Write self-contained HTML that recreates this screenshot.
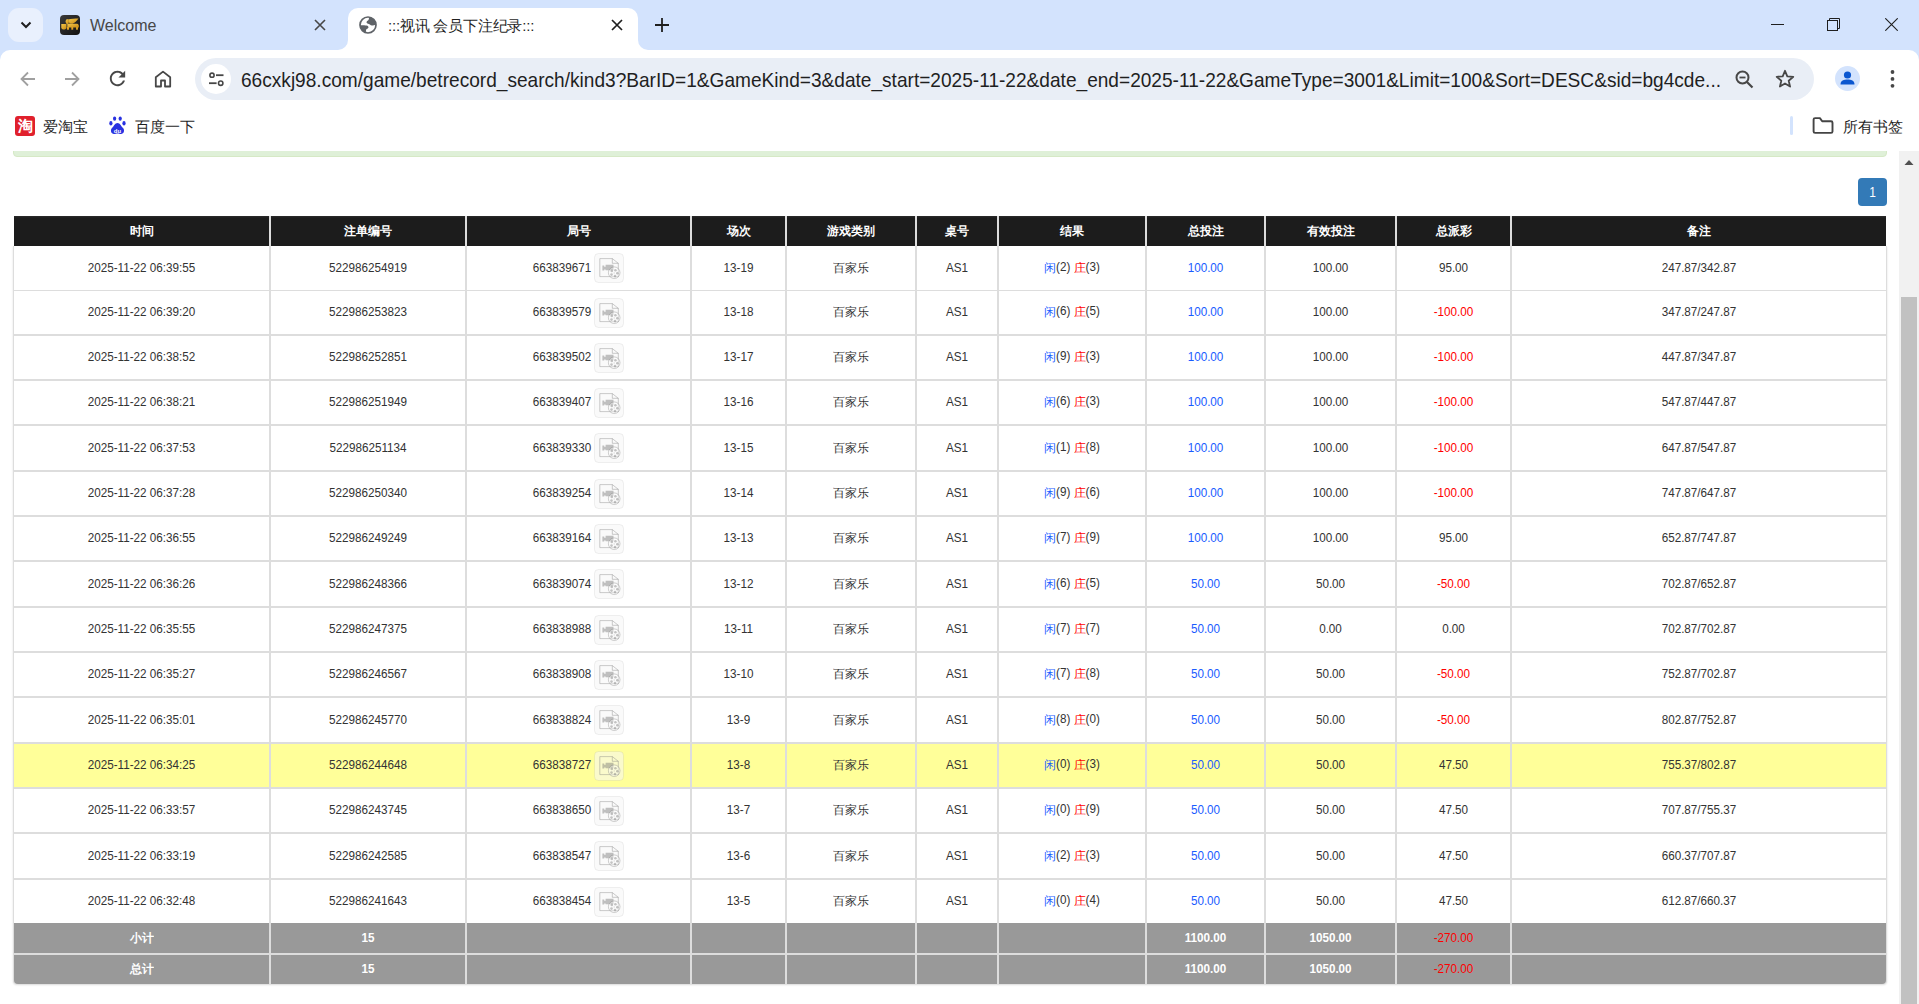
<!DOCTYPE html>
<html><head><meta charset="utf-8"><title>:::视讯 会员下注纪录:::</title>
<style>
*{box-sizing:border-box;margin:0;padding:0}
html,body{width:1919px;height:1004px;overflow:hidden;background:#fff;font-family:"Liberation Sans",sans-serif;position:relative}
.a{position:absolute}
.tabs{left:0;top:0;width:1919px;height:62px;background:#d3e3fd}
.ui{font-family:"Liberation Sans",sans-serif;color:#1f1f1f;white-space:nowrap}
.cell{position:absolute;display:flex;align-items:center;justify-content:center;white-space:nowrap;font-size:11.7px;color:#333}
.t{display:inline-block;transform:scaleY(1.16);position:relative;top:-2px}
.c{display:inline-block;transform:scaleY(.862);position:relative;top:2px}
.hd{color:#fff;font-weight:bold;font-size:12px;background:linear-gradient(#2c2c2c,#1c1c1c 2px,#1c1c1c)}
.ft{color:#fff;font-weight:bold;font-size:11.7px;background:#999}
.bl{color:#1a5cff}
.rd{color:#ff0000}
.vid{display:block;width:30px;height:30px;margin-left:3px;position:relative;top:0}
</style></head><body>

<div class="a tabs"></div>
<div class="a" style="left:8px;top:8px;width:35px;height:34px;border-radius:11px;background:#e9f0fd"></div>
<svg class="a" style="left:19px;top:18px" width="14" height="14" viewBox="0 0 14 14"><path d="M2.5 4.5 L7 9 L11.5 4.5" fill="none" stroke="#1f1f1f" stroke-width="2"/></svg>
<div class="a" style="left:60px;top:15px;width:20px;height:20px;border-radius:4px;background:linear-gradient(135deg,#3a3a3a,#111)"></div>
<svg class="a" style="left:60px;top:15px" width="20" height="20" viewBox="0 0 20 20"><defs><linearGradient id="gd" x1="0" y1="0" x2="1" y2="1"><stop offset="0" stop-color="#f3c64a"/><stop offset="1" stop-color="#c98a12"/></linearGradient></defs><path d="M8 4.6 C11 3.6 15 3.6 18.5 3.6 C17 5.6 15 7.6 12.5 8.8 L9.5 8.6 Z" fill="url(#gd)"/><ellipse cx="7.3" cy="6.6" rx="1.7" ry="2.5" fill="url(#gd)"/><path d="M7.3 8.8 H17 C18.3 8.8 18.8 10 18.8 11 V12.4 H7.3 Z" fill="url(#gd)"/><rect x="7" y="12" width="2" height="2.7" fill="#e0a325"/><rect x="11.3" y="12" width="1.9" height="2.7" fill="#e0a325"/><rect x="16" y="12" width="2" height="2.7" fill="#d39a22"/><path d="M1.3 9 H6.5 V12.5 C6.5 14 5 14.6 3.9 14.6 C2.7 14.6 1.3 14 1.3 12.5 Z" fill="url(#gd)"/></svg>
<div class="a ui" style="left:90px;top:15px;font-size:16px;color:#474747;line-height:22px">Welcome</div>
<svg class="a" style="left:314px;top:19px" width="12" height="12" viewBox="0 0 12 12"><path d="M1 1 L11 11 M11 1 L1 11" stroke="#474747" stroke-width="1.6"/></svg>
<div class="a" style="left:348px;top:8px;width:290px;height:42px;background:#fff;border-radius:10px 10px 0 0"></div>
<div class="a" style="left:338px;top:40px;width:10px;height:10px;background:#fff"></div><div class="a" style="left:328px;top:30px;width:20px;height:20px;background:#d3e3fd;border-radius:0 0 10px 0"></div>
<div class="a" style="left:638px;top:40px;width:10px;height:10px;background:#fff"></div><div class="a" style="left:638px;top:30px;width:20px;height:20px;background:#d3e3fd;border-radius:0 0 0 10px"></div>
<svg class="a" style="left:356px;top:13px" width="24" height="24" viewBox="0 0 24 24"><defs><clipPath id="gc"><circle cx="12" cy="12" r="8"/></clipPath></defs><g clip-path="url(#gc)" fill="#5f6368"><path d="M13 3 C13 6 13 7 11.5 7.8 C10.2 8.5 10.2 10 11.5 10.4 C13.5 10.9 14.3 12.2 16 12.4 C17.5 12.6 19 11.8 21 11 L21 3 Z"/><path d="M3 12.2 C7 12.1 10 12 11.5 12.8 C12.8 13.5 12.9 15.2 11.2 15.8 C10 16.2 9.7 17.8 10 21 L3 21 Z"/></g><circle cx="12" cy="12" r="8" fill="none" stroke="#5f6368" stroke-width="1.7"/></svg>
<div class="a ui" style="left:388px;top:15px;font-size:15px;color:#1f1f1f;line-height:22px;letter-spacing:-0.2px">:::视讯 会员下注纪录:::</div>
<svg class="a" style="left:611px;top:19px" width="12" height="12" viewBox="0 0 12 12"><path d="M1 1 L11 11 M11 1 L1 11" stroke="#1f1f1f" stroke-width="1.7"/></svg>
<svg class="a" style="left:655px;top:18px" width="14" height="14" viewBox="0 0 14 14"><path d="M7 0 V14 M0 7 H14" stroke="#1f1f1f" stroke-width="1.8"/></svg>
<div class="a" style="left:1771px;top:24px;width:13px;height:1px;background:#1f1f1f"></div>
<svg class="a" style="left:1826px;top:17px" width="15" height="15" viewBox="0 0 15 15"><rect x="1.5" y="3.5" width="10" height="10" fill="none" stroke="#1f1f1f" stroke-width="1"/><path d="M3.5 3.5 V1.5 H13.5 V11.5 H11.5" fill="none" stroke="#1f1f1f" stroke-width="1"/></svg>
<svg class="a" style="left:1885px;top:18px" width="13" height="13" viewBox="0 0 13 13"><path d="M0.3 0.3 L12.7 12.7 M12.7 0.3 L0.3 12.7" stroke="#1f1f1f" stroke-width="1.1"/></svg>
<div class="a" style="left:0;top:50px;width:1919px;height:101px;background:#fff;border-radius:10px 10px 0 0"></div>
<svg class="a" style="left:19px;top:70px" width="18" height="18" viewBox="0 0 18 18"><path d="M16 9 H3 M9 2.5 L2.5 9 L9 15.5" fill="none" stroke="#a0a0a0" stroke-width="1.8"/></svg>
<svg class="a" style="left:63px;top:70px" width="18" height="18" viewBox="0 0 18 18"><path d="M2 9 H15 M9 2.5 L15.5 9 L9 15.5" fill="none" stroke="#a0a0a0" stroke-width="1.8"/></svg>
<svg class="a" style="left:106px;top:67px" width="23" height="23" viewBox="0 0 24 24"><path d="M17.65 6.35C16.2 4.9 14.21 4 12 4c-4.42 0-7.99 3.58-7.99 8s3.57 8 7.99 8c3.73 0 6.84-2.55 7.73-6h-2.08c-.82 2.33-3.04 4-5.65 4-3.31 0-6-2.690-6-6s2.69-6 6-6c1.66 0 3.14.69 4.22 1.78L13 11h7V4l-2.35 2.35z" fill="#474747"/></svg>
<svg class="a" style="left:154px;top:70px" width="18" height="18" viewBox="0 0 18 18"><path d="M1.8 16.5 V7.2 L9 1.6 L16.2 7.2 V16.5 H11 V10.5 H7 V16.5 Z" fill="none" stroke="#474747" stroke-width="1.8" stroke-linejoin="round"/></svg>
<div class="a" style="left:195px;top:58px;width:1619px;height:42px;border-radius:21px;background:#e9eef6"></div>
<div class="a" style="left:201px;top:64px;width:30px;height:30px;border-radius:15px;background:#fff"></div>
<svg class="a" style="left:207px;top:70px" width="18" height="18" viewBox="0 0 18 18"><circle cx="5" cy="5.2" r="2.1" fill="none" stroke="#474747" stroke-width="1.6"/><path d="M9 5.2 H16.5" stroke="#474747" stroke-width="1.8"/><circle cx="13.7" cy="13.2" r="2.2" fill="none" stroke="#474747" stroke-width="1.6"/><path d="M2 13.2 H9.6" stroke="#474747" stroke-width="1.8"/></svg>
<div class="a ui" style="left:241px;top:67px;font-size:19.1px;line-height:26px;color:#1f1f1f;width:1482px;overflow:hidden;transform:scaleY(1.1);transform-origin:0 50%" id="url">66cxkj98.com/game/betrecord_search/kind3?BarID=1&amp;GameKind=3&amp;date_start=2025-11-22&amp;date_end=2025-11-22&amp;GameType=3001&amp;Limit=100&amp;Sort=DESC&amp;sid=bg4cde...</div>
<svg class="a" style="left:1735px;top:70px" width="19" height="19" viewBox="0 0 19 19"><circle cx="7.5" cy="7.5" r="6" fill="none" stroke="#474747" stroke-width="2"/><path d="M12 12 L17.5 17.5" stroke="#474747" stroke-width="2.2"/><path d="M4.5 7.5 H10.5" stroke="#474747" stroke-width="1.8"/></svg>
<svg class="a" style="left:1775px;top:69px" width="20" height="20" viewBox="0 0 20 20"><path d="M10 1.8 L12.3 7.3 L18.3 7.8 L13.7 11.7 L15.1 17.6 L10 14.5 L4.9 17.6 L6.3 11.7 L1.7 7.8 L7.7 7.3 Z" fill="none" stroke="#474747" stroke-width="1.8" stroke-linejoin="round"/></svg>
<div class="a" style="left:1835px;top:66px;width:25px;height:25px;border-radius:13px;background:#d3e3fd"></div>
<svg class="a" style="left:1835px;top:66px" width="25" height="25" viewBox="0 0 25 25"><circle cx="12.5" cy="9" r="3.6" fill="#0b57d0"/><path d="M5.5 18.5 C5.5 14.5 9 13.6 12.5 13.6 C16 13.6 19.5 14.5 19.5 18.5 Z" fill="#0b57d0"/></svg>
<svg class="a" style="left:1889px;top:69px" width="7" height="20" viewBox="0 0 7 20"><circle cx="3.5" cy="3" r="1.9" fill="#474747"/><circle cx="3.5" cy="9.9" r="1.9" fill="#474747"/><circle cx="3.5" cy="16.8" r="1.9" fill="#474747"/></svg>
<div class="a" style="left:15px;top:116px;width:20px;height:20px;border-radius:3px;background:#e0202c"></div>
<div class="a ui" style="left:15px;top:116px;width:20px;height:20px;line-height:20px;text-align:center;font-size:15px;color:#fff;font-weight:bold">淘</div>
<div class="a ui" style="left:43px;top:116px;font-size:15px;line-height:22px;color:#1f1f1f">爱淘宝</div>
<svg class="a" style="left:109px;top:116px" width="17" height="19" viewBox="0 0 17 19"><ellipse cx="5.6" cy="2.6" rx="1.6" ry="2.2" fill="#2932e1"/><ellipse cx="11.2" cy="2.6" rx="1.6" ry="2.2" fill="#2932e1"/><ellipse cx="1.9" cy="7.2" rx="1.6" ry="2.2" fill="#2932e1"/><ellipse cx="15" cy="7.2" rx="1.6" ry="2.2" fill="#2932e1"/><path d="M8.5 7 C6 7 5 10 3 12 C1 14 2 18 5 18 C6.5 18 7 17.5 8.5 17.5 C10 17.5 10.5 18 12 18 C15 18 16 14 14 12 C12 10 11 7 8.5 7Z" fill="#2932e1"/><text x="8.5" y="16.5" font-size="6" font-family="Liberation Sans" font-weight="bold" fill="#fff" text-anchor="middle">du</text></svg>
<div class="a ui" style="left:135px;top:116px;font-size:15px;line-height:22px;color:#1f1f1f">百度一下</div>
<div class="a" style="left:1790px;top:116px;width:3px;height:19px;border-radius:1.5px;background:#d3e3fd"></div>
<svg class="a" style="left:1812px;top:117px" width="22" height="17" viewBox="0 0 22 17"><path d="M1.6 2.6 Q1.6 1.1 3.1 1.1 H7.9 L10.2 4.3 H19.1 Q20.5 4.3 20.5 5.7 V14.5 Q20.5 15.9 19.1 15.9 H3.1 Q1.6 15.9 1.6 14.5 Z" fill="none" stroke="#444" stroke-width="1.9" stroke-linejoin="round"/></svg>
<div class="a ui" style="left:1843px;top:116px;font-size:15px;line-height:22px;color:#1f1f1f">所有书签</div>
<div class="a" style="left:13px;top:137px;width:1874px;height:20px;background:#dff0d8;border:1px solid #d6e9c6;border-radius:4px"></div>
<div class="a" style="left:0;top:117px;width:1919px;height:34px"></div>
<div class="a" style="left:0;top:136px;width:1899px;height:15px;background:#fff"></div>
<div class="a" style="left:1899px;top:151px;width:20px;height:853px;background:#f1f1f1"></div>
<svg class="a" style="left:1903px;top:158px" width="12" height="8" viewBox="0 0 12 8"><path d="M1.5 7 L6 2 L10.5 7 Z" fill="#505050"/></svg>
<div class="a" style="left:1901px;top:297px;width:16px;height:707px;background:#c1c1c1"></div>
<div class="a ui" style="left:1858px;top:178px;width:29px;height:28px;border-radius:4px;background:#337ab7;color:#fff;font-size:12px;line-height:28px;text-align:center"><span style="display:inline-block;transform:scaleY(1.16)">1</span></div>
<div class="a" style="left:14px;top:216px;width:1872px;height:30px;background:#dddddd"></div>
<div class="a" style="left:13px;top:246px;width:1874px;height:738px;background:#dddddd;border-radius:0 0 4px 4px;box-shadow:0 1px 2px rgba(0,0,0,.15)"></div>
<div class="cell hd" style="left:14px;top:216px;width:255px;height:30px">时间</div>
<div class="cell hd" style="left:271px;top:216px;width:194px;height:30px">注单编号</div>
<div class="cell hd" style="left:467px;top:216px;width:223px;height:30px">局号</div>
<div class="cell hd" style="left:692px;top:216px;width:93px;height:30px">场次</div>
<div class="cell hd" style="left:787px;top:216px;width:128px;height:30px">游戏类别</div>
<div class="cell hd" style="left:917px;top:216px;width:80px;height:30px">桌号</div>
<div class="cell hd" style="left:999px;top:216px;width:146px;height:30px">结果</div>
<div class="cell hd" style="left:1147px;top:216px;width:117px;height:30px">总投注</div>
<div class="cell hd" style="left:1266px;top:216px;width:129px;height:30px">有效投注</div>
<div class="cell hd" style="left:1397px;top:216px;width:113px;height:30px">总派彩</div>
<div class="cell hd" style="left:1512px;top:216px;width:374px;height:30px">备注</div>
<div class="cell" style="left:14px;top:246px;width:255px;height:44px;background:#ffffff"><span class="t">2025-11-22 06:39:55</span></div>
<div class="cell" style="left:271px;top:246px;width:194px;height:44px;background:#ffffff"><span class="t">522986254919</span></div>
<div class="cell" style="left:467px;top:246px;width:223px;height:44px;background:#ffffff"><span class="t">663839671</span><svg class="vid" width="30" height="30" viewBox="0 0 30 30"><rect x="0.5" y="0.5" width="29" height="29" rx="4" fill="rgba(246,246,246,0.55)" stroke="rgba(0,0,0,0.06)"/><g><path d="M5.8 5.6 H18.3 L24.3 10.3 V23.6 H5.8 Z" fill="none" stroke="rgba(120,120,120,0.38)" stroke-width="1"/><path d="M18.3 5.6 V10.3 H24.3" fill="none" stroke="rgba(120,120,120,0.38)"/><path d="M8.4 12.6 H10.2 V17.6 H8.4 Z M10.2 13.8 H11.6 V16.4 H10.2 Z M11.6 11.8 H19.5 V17.2 H11.6 Z" fill="rgba(110,110,110,0.42)"/><circle cx="20.2" cy="19.7" r="5.8" fill="rgba(255,255,255,0.35)" stroke="rgba(120,120,120,0.4)" stroke-width="0.9"/><circle cx="17.8" cy="17.9" r="1.3" fill="rgba(110,110,110,0.4)"/><circle cx="21.4" cy="17.3" r="1.3" fill="rgba(110,110,110,0.4)"/><circle cx="23.3" cy="20.3" r="1.3" fill="rgba(110,110,110,0.4)"/><circle cx="21" cy="23.1" r="1.3" fill="rgba(110,110,110,0.4)"/><circle cx="17.5" cy="21.6" r="1.3" fill="rgba(110,110,110,0.4)"/><path d="M19.6 20 H20.8" stroke="rgba(110,110,110,0.4)" stroke-width="0.8"/></g></svg></div>
<div class="cell" style="left:692px;top:246px;width:93px;height:44px;background:#ffffff"><span class="t">13-19</span></div>
<div class="cell" style="left:787px;top:246px;width:128px;height:44px;background:#ffffff"><span class="t"><span class="c">百家乐</span></span></div>
<div class="cell" style="left:917px;top:246px;width:80px;height:44px;background:#ffffff"><span class="t">AS1</span></div>
<div class="cell" style="left:999px;top:246px;width:146px;height:44px;background:#ffffff"><span class="t"><span class="bl c">闲</span>(2)&nbsp;<span class="rd c">庄</span>(3)</span></div>
<div class="cell" style="left:1147px;top:246px;width:117px;height:44px;background:#ffffff"><span class="t"><span class="bl">100.00</span></span></div>
<div class="cell" style="left:1266px;top:246px;width:129px;height:44px;background:#ffffff"><span class="t">100.00</span></div>
<div class="cell" style="left:1397px;top:246px;width:113px;height:44px;background:#ffffff"><span class="t">95.00</span></div>
<div class="cell" style="left:1512px;top:246px;width:374px;height:44px;background:#ffffff"><span class="t">247.87/342.87</span></div>
<div class="cell" style="left:14px;top:291px;width:255px;height:43px;background:#ffffff"><span class="t">2025-11-22 06:39:20</span></div>
<div class="cell" style="left:271px;top:291px;width:194px;height:43px;background:#ffffff"><span class="t">522986253823</span></div>
<div class="cell" style="left:467px;top:291px;width:223px;height:43px;background:#ffffff"><span class="t">663839579</span><svg class="vid" width="30" height="30" viewBox="0 0 30 30"><rect x="0.5" y="0.5" width="29" height="29" rx="4" fill="rgba(246,246,246,0.55)" stroke="rgba(0,0,0,0.06)"/><g><path d="M5.8 5.6 H18.3 L24.3 10.3 V23.6 H5.8 Z" fill="none" stroke="rgba(120,120,120,0.38)" stroke-width="1"/><path d="M18.3 5.6 V10.3 H24.3" fill="none" stroke="rgba(120,120,120,0.38)"/><path d="M8.4 12.6 H10.2 V17.6 H8.4 Z M10.2 13.8 H11.6 V16.4 H10.2 Z M11.6 11.8 H19.5 V17.2 H11.6 Z" fill="rgba(110,110,110,0.42)"/><circle cx="20.2" cy="19.7" r="5.8" fill="rgba(255,255,255,0.35)" stroke="rgba(120,120,120,0.4)" stroke-width="0.9"/><circle cx="17.8" cy="17.9" r="1.3" fill="rgba(110,110,110,0.4)"/><circle cx="21.4" cy="17.3" r="1.3" fill="rgba(110,110,110,0.4)"/><circle cx="23.3" cy="20.3" r="1.3" fill="rgba(110,110,110,0.4)"/><circle cx="21" cy="23.1" r="1.3" fill="rgba(110,110,110,0.4)"/><circle cx="17.5" cy="21.6" r="1.3" fill="rgba(110,110,110,0.4)"/><path d="M19.6 20 H20.8" stroke="rgba(110,110,110,0.4)" stroke-width="0.8"/></g></svg></div>
<div class="cell" style="left:692px;top:291px;width:93px;height:43px;background:#ffffff"><span class="t">13-18</span></div>
<div class="cell" style="left:787px;top:291px;width:128px;height:43px;background:#ffffff"><span class="t"><span class="c">百家乐</span></span></div>
<div class="cell" style="left:917px;top:291px;width:80px;height:43px;background:#ffffff"><span class="t">AS1</span></div>
<div class="cell" style="left:999px;top:291px;width:146px;height:43px;background:#ffffff"><span class="t"><span class="bl c">闲</span>(6)&nbsp;<span class="rd c">庄</span>(5)</span></div>
<div class="cell" style="left:1147px;top:291px;width:117px;height:43px;background:#ffffff"><span class="t"><span class="bl">100.00</span></span></div>
<div class="cell" style="left:1266px;top:291px;width:129px;height:43px;background:#ffffff"><span class="t">100.00</span></div>
<div class="cell" style="left:1397px;top:291px;width:113px;height:43px;background:#ffffff"><span class="t"><span class="rd">-100.00</span></span></div>
<div class="cell" style="left:1512px;top:291px;width:374px;height:43px;background:#ffffff"><span class="t">347.87/247.87</span></div>
<div class="cell" style="left:14px;top:336px;width:255px;height:43px;background:#ffffff"><span class="t">2025-11-22 06:38:52</span></div>
<div class="cell" style="left:271px;top:336px;width:194px;height:43px;background:#ffffff"><span class="t">522986252851</span></div>
<div class="cell" style="left:467px;top:336px;width:223px;height:43px;background:#ffffff"><span class="t">663839502</span><svg class="vid" width="30" height="30" viewBox="0 0 30 30"><rect x="0.5" y="0.5" width="29" height="29" rx="4" fill="rgba(246,246,246,0.55)" stroke="rgba(0,0,0,0.06)"/><g><path d="M5.8 5.6 H18.3 L24.3 10.3 V23.6 H5.8 Z" fill="none" stroke="rgba(120,120,120,0.38)" stroke-width="1"/><path d="M18.3 5.6 V10.3 H24.3" fill="none" stroke="rgba(120,120,120,0.38)"/><path d="M8.4 12.6 H10.2 V17.6 H8.4 Z M10.2 13.8 H11.6 V16.4 H10.2 Z M11.6 11.8 H19.5 V17.2 H11.6 Z" fill="rgba(110,110,110,0.42)"/><circle cx="20.2" cy="19.7" r="5.8" fill="rgba(255,255,255,0.35)" stroke="rgba(120,120,120,0.4)" stroke-width="0.9"/><circle cx="17.8" cy="17.9" r="1.3" fill="rgba(110,110,110,0.4)"/><circle cx="21.4" cy="17.3" r="1.3" fill="rgba(110,110,110,0.4)"/><circle cx="23.3" cy="20.3" r="1.3" fill="rgba(110,110,110,0.4)"/><circle cx="21" cy="23.1" r="1.3" fill="rgba(110,110,110,0.4)"/><circle cx="17.5" cy="21.6" r="1.3" fill="rgba(110,110,110,0.4)"/><path d="M19.6 20 H20.8" stroke="rgba(110,110,110,0.4)" stroke-width="0.8"/></g></svg></div>
<div class="cell" style="left:692px;top:336px;width:93px;height:43px;background:#ffffff"><span class="t">13-17</span></div>
<div class="cell" style="left:787px;top:336px;width:128px;height:43px;background:#ffffff"><span class="t"><span class="c">百家乐</span></span></div>
<div class="cell" style="left:917px;top:336px;width:80px;height:43px;background:#ffffff"><span class="t">AS1</span></div>
<div class="cell" style="left:999px;top:336px;width:146px;height:43px;background:#ffffff"><span class="t"><span class="bl c">闲</span>(9)&nbsp;<span class="rd c">庄</span>(3)</span></div>
<div class="cell" style="left:1147px;top:336px;width:117px;height:43px;background:#ffffff"><span class="t"><span class="bl">100.00</span></span></div>
<div class="cell" style="left:1266px;top:336px;width:129px;height:43px;background:#ffffff"><span class="t">100.00</span></div>
<div class="cell" style="left:1397px;top:336px;width:113px;height:43px;background:#ffffff"><span class="t"><span class="rd">-100.00</span></span></div>
<div class="cell" style="left:1512px;top:336px;width:374px;height:43px;background:#ffffff"><span class="t">447.87/347.87</span></div>
<div class="cell" style="left:14px;top:381px;width:255px;height:43px;background:#ffffff"><span class="t">2025-11-22 06:38:21</span></div>
<div class="cell" style="left:271px;top:381px;width:194px;height:43px;background:#ffffff"><span class="t">522986251949</span></div>
<div class="cell" style="left:467px;top:381px;width:223px;height:43px;background:#ffffff"><span class="t">663839407</span><svg class="vid" width="30" height="30" viewBox="0 0 30 30"><rect x="0.5" y="0.5" width="29" height="29" rx="4" fill="rgba(246,246,246,0.55)" stroke="rgba(0,0,0,0.06)"/><g><path d="M5.8 5.6 H18.3 L24.3 10.3 V23.6 H5.8 Z" fill="none" stroke="rgba(120,120,120,0.38)" stroke-width="1"/><path d="M18.3 5.6 V10.3 H24.3" fill="none" stroke="rgba(120,120,120,0.38)"/><path d="M8.4 12.6 H10.2 V17.6 H8.4 Z M10.2 13.8 H11.6 V16.4 H10.2 Z M11.6 11.8 H19.5 V17.2 H11.6 Z" fill="rgba(110,110,110,0.42)"/><circle cx="20.2" cy="19.7" r="5.8" fill="rgba(255,255,255,0.35)" stroke="rgba(120,120,120,0.4)" stroke-width="0.9"/><circle cx="17.8" cy="17.9" r="1.3" fill="rgba(110,110,110,0.4)"/><circle cx="21.4" cy="17.3" r="1.3" fill="rgba(110,110,110,0.4)"/><circle cx="23.3" cy="20.3" r="1.3" fill="rgba(110,110,110,0.4)"/><circle cx="21" cy="23.1" r="1.3" fill="rgba(110,110,110,0.4)"/><circle cx="17.5" cy="21.6" r="1.3" fill="rgba(110,110,110,0.4)"/><path d="M19.6 20 H20.8" stroke="rgba(110,110,110,0.4)" stroke-width="0.8"/></g></svg></div>
<div class="cell" style="left:692px;top:381px;width:93px;height:43px;background:#ffffff"><span class="t">13-16</span></div>
<div class="cell" style="left:787px;top:381px;width:128px;height:43px;background:#ffffff"><span class="t"><span class="c">百家乐</span></span></div>
<div class="cell" style="left:917px;top:381px;width:80px;height:43px;background:#ffffff"><span class="t">AS1</span></div>
<div class="cell" style="left:999px;top:381px;width:146px;height:43px;background:#ffffff"><span class="t"><span class="bl c">闲</span>(6)&nbsp;<span class="rd c">庄</span>(3)</span></div>
<div class="cell" style="left:1147px;top:381px;width:117px;height:43px;background:#ffffff"><span class="t"><span class="bl">100.00</span></span></div>
<div class="cell" style="left:1266px;top:381px;width:129px;height:43px;background:#ffffff"><span class="t">100.00</span></div>
<div class="cell" style="left:1397px;top:381px;width:113px;height:43px;background:#ffffff"><span class="t"><span class="rd">-100.00</span></span></div>
<div class="cell" style="left:1512px;top:381px;width:374px;height:43px;background:#ffffff"><span class="t">547.87/447.87</span></div>
<div class="cell" style="left:14px;top:426px;width:255px;height:44px;background:#ffffff"><span class="t">2025-11-22 06:37:53</span></div>
<div class="cell" style="left:271px;top:426px;width:194px;height:44px;background:#ffffff"><span class="t">522986251134</span></div>
<div class="cell" style="left:467px;top:426px;width:223px;height:44px;background:#ffffff"><span class="t">663839330</span><svg class="vid" width="30" height="30" viewBox="0 0 30 30"><rect x="0.5" y="0.5" width="29" height="29" rx="4" fill="rgba(246,246,246,0.55)" stroke="rgba(0,0,0,0.06)"/><g><path d="M5.8 5.6 H18.3 L24.3 10.3 V23.6 H5.8 Z" fill="none" stroke="rgba(120,120,120,0.38)" stroke-width="1"/><path d="M18.3 5.6 V10.3 H24.3" fill="none" stroke="rgba(120,120,120,0.38)"/><path d="M8.4 12.6 H10.2 V17.6 H8.4 Z M10.2 13.8 H11.6 V16.4 H10.2 Z M11.6 11.8 H19.5 V17.2 H11.6 Z" fill="rgba(110,110,110,0.42)"/><circle cx="20.2" cy="19.7" r="5.8" fill="rgba(255,255,255,0.35)" stroke="rgba(120,120,120,0.4)" stroke-width="0.9"/><circle cx="17.8" cy="17.9" r="1.3" fill="rgba(110,110,110,0.4)"/><circle cx="21.4" cy="17.3" r="1.3" fill="rgba(110,110,110,0.4)"/><circle cx="23.3" cy="20.3" r="1.3" fill="rgba(110,110,110,0.4)"/><circle cx="21" cy="23.1" r="1.3" fill="rgba(110,110,110,0.4)"/><circle cx="17.5" cy="21.6" r="1.3" fill="rgba(110,110,110,0.4)"/><path d="M19.6 20 H20.8" stroke="rgba(110,110,110,0.4)" stroke-width="0.8"/></g></svg></div>
<div class="cell" style="left:692px;top:426px;width:93px;height:44px;background:#ffffff"><span class="t">13-15</span></div>
<div class="cell" style="left:787px;top:426px;width:128px;height:44px;background:#ffffff"><span class="t"><span class="c">百家乐</span></span></div>
<div class="cell" style="left:917px;top:426px;width:80px;height:44px;background:#ffffff"><span class="t">AS1</span></div>
<div class="cell" style="left:999px;top:426px;width:146px;height:44px;background:#ffffff"><span class="t"><span class="bl c">闲</span>(1)&nbsp;<span class="rd c">庄</span>(8)</span></div>
<div class="cell" style="left:1147px;top:426px;width:117px;height:44px;background:#ffffff"><span class="t"><span class="bl">100.00</span></span></div>
<div class="cell" style="left:1266px;top:426px;width:129px;height:44px;background:#ffffff"><span class="t">100.00</span></div>
<div class="cell" style="left:1397px;top:426px;width:113px;height:44px;background:#ffffff"><span class="t"><span class="rd">-100.00</span></span></div>
<div class="cell" style="left:1512px;top:426px;width:374px;height:44px;background:#ffffff"><span class="t">647.87/547.87</span></div>
<div class="cell" style="left:14px;top:472px;width:255px;height:43px;background:#ffffff"><span class="t">2025-11-22 06:37:28</span></div>
<div class="cell" style="left:271px;top:472px;width:194px;height:43px;background:#ffffff"><span class="t">522986250340</span></div>
<div class="cell" style="left:467px;top:472px;width:223px;height:43px;background:#ffffff"><span class="t">663839254</span><svg class="vid" width="30" height="30" viewBox="0 0 30 30"><rect x="0.5" y="0.5" width="29" height="29" rx="4" fill="rgba(246,246,246,0.55)" stroke="rgba(0,0,0,0.06)"/><g><path d="M5.8 5.6 H18.3 L24.3 10.3 V23.6 H5.8 Z" fill="none" stroke="rgba(120,120,120,0.38)" stroke-width="1"/><path d="M18.3 5.6 V10.3 H24.3" fill="none" stroke="rgba(120,120,120,0.38)"/><path d="M8.4 12.6 H10.2 V17.6 H8.4 Z M10.2 13.8 H11.6 V16.4 H10.2 Z M11.6 11.8 H19.5 V17.2 H11.6 Z" fill="rgba(110,110,110,0.42)"/><circle cx="20.2" cy="19.7" r="5.8" fill="rgba(255,255,255,0.35)" stroke="rgba(120,120,120,0.4)" stroke-width="0.9"/><circle cx="17.8" cy="17.9" r="1.3" fill="rgba(110,110,110,0.4)"/><circle cx="21.4" cy="17.3" r="1.3" fill="rgba(110,110,110,0.4)"/><circle cx="23.3" cy="20.3" r="1.3" fill="rgba(110,110,110,0.4)"/><circle cx="21" cy="23.1" r="1.3" fill="rgba(110,110,110,0.4)"/><circle cx="17.5" cy="21.6" r="1.3" fill="rgba(110,110,110,0.4)"/><path d="M19.6 20 H20.8" stroke="rgba(110,110,110,0.4)" stroke-width="0.8"/></g></svg></div>
<div class="cell" style="left:692px;top:472px;width:93px;height:43px;background:#ffffff"><span class="t">13-14</span></div>
<div class="cell" style="left:787px;top:472px;width:128px;height:43px;background:#ffffff"><span class="t"><span class="c">百家乐</span></span></div>
<div class="cell" style="left:917px;top:472px;width:80px;height:43px;background:#ffffff"><span class="t">AS1</span></div>
<div class="cell" style="left:999px;top:472px;width:146px;height:43px;background:#ffffff"><span class="t"><span class="bl c">闲</span>(9)&nbsp;<span class="rd c">庄</span>(6)</span></div>
<div class="cell" style="left:1147px;top:472px;width:117px;height:43px;background:#ffffff"><span class="t"><span class="bl">100.00</span></span></div>
<div class="cell" style="left:1266px;top:472px;width:129px;height:43px;background:#ffffff"><span class="t">100.00</span></div>
<div class="cell" style="left:1397px;top:472px;width:113px;height:43px;background:#ffffff"><span class="t"><span class="rd">-100.00</span></span></div>
<div class="cell" style="left:1512px;top:472px;width:374px;height:43px;background:#ffffff"><span class="t">747.87/647.87</span></div>
<div class="cell" style="left:14px;top:517px;width:255px;height:43px;background:#ffffff"><span class="t">2025-11-22 06:36:55</span></div>
<div class="cell" style="left:271px;top:517px;width:194px;height:43px;background:#ffffff"><span class="t">522986249249</span></div>
<div class="cell" style="left:467px;top:517px;width:223px;height:43px;background:#ffffff"><span class="t">663839164</span><svg class="vid" width="30" height="30" viewBox="0 0 30 30"><rect x="0.5" y="0.5" width="29" height="29" rx="4" fill="rgba(246,246,246,0.55)" stroke="rgba(0,0,0,0.06)"/><g><path d="M5.8 5.6 H18.3 L24.3 10.3 V23.6 H5.8 Z" fill="none" stroke="rgba(120,120,120,0.38)" stroke-width="1"/><path d="M18.3 5.6 V10.3 H24.3" fill="none" stroke="rgba(120,120,120,0.38)"/><path d="M8.4 12.6 H10.2 V17.6 H8.4 Z M10.2 13.8 H11.6 V16.4 H10.2 Z M11.6 11.8 H19.5 V17.2 H11.6 Z" fill="rgba(110,110,110,0.42)"/><circle cx="20.2" cy="19.7" r="5.8" fill="rgba(255,255,255,0.35)" stroke="rgba(120,120,120,0.4)" stroke-width="0.9"/><circle cx="17.8" cy="17.9" r="1.3" fill="rgba(110,110,110,0.4)"/><circle cx="21.4" cy="17.3" r="1.3" fill="rgba(110,110,110,0.4)"/><circle cx="23.3" cy="20.3" r="1.3" fill="rgba(110,110,110,0.4)"/><circle cx="21" cy="23.1" r="1.3" fill="rgba(110,110,110,0.4)"/><circle cx="17.5" cy="21.6" r="1.3" fill="rgba(110,110,110,0.4)"/><path d="M19.6 20 H20.8" stroke="rgba(110,110,110,0.4)" stroke-width="0.8"/></g></svg></div>
<div class="cell" style="left:692px;top:517px;width:93px;height:43px;background:#ffffff"><span class="t">13-13</span></div>
<div class="cell" style="left:787px;top:517px;width:128px;height:43px;background:#ffffff"><span class="t"><span class="c">百家乐</span></span></div>
<div class="cell" style="left:917px;top:517px;width:80px;height:43px;background:#ffffff"><span class="t">AS1</span></div>
<div class="cell" style="left:999px;top:517px;width:146px;height:43px;background:#ffffff"><span class="t"><span class="bl c">闲</span>(7)&nbsp;<span class="rd c">庄</span>(9)</span></div>
<div class="cell" style="left:1147px;top:517px;width:117px;height:43px;background:#ffffff"><span class="t"><span class="bl">100.00</span></span></div>
<div class="cell" style="left:1266px;top:517px;width:129px;height:43px;background:#ffffff"><span class="t">100.00</span></div>
<div class="cell" style="left:1397px;top:517px;width:113px;height:43px;background:#ffffff"><span class="t">95.00</span></div>
<div class="cell" style="left:1512px;top:517px;width:374px;height:43px;background:#ffffff"><span class="t">652.87/747.87</span></div>
<div class="cell" style="left:14px;top:562px;width:255px;height:44px;background:#ffffff"><span class="t">2025-11-22 06:36:26</span></div>
<div class="cell" style="left:271px;top:562px;width:194px;height:44px;background:#ffffff"><span class="t">522986248366</span></div>
<div class="cell" style="left:467px;top:562px;width:223px;height:44px;background:#ffffff"><span class="t">663839074</span><svg class="vid" width="30" height="30" viewBox="0 0 30 30"><rect x="0.5" y="0.5" width="29" height="29" rx="4" fill="rgba(246,246,246,0.55)" stroke="rgba(0,0,0,0.06)"/><g><path d="M5.8 5.6 H18.3 L24.3 10.3 V23.6 H5.8 Z" fill="none" stroke="rgba(120,120,120,0.38)" stroke-width="1"/><path d="M18.3 5.6 V10.3 H24.3" fill="none" stroke="rgba(120,120,120,0.38)"/><path d="M8.4 12.6 H10.2 V17.6 H8.4 Z M10.2 13.8 H11.6 V16.4 H10.2 Z M11.6 11.8 H19.5 V17.2 H11.6 Z" fill="rgba(110,110,110,0.42)"/><circle cx="20.2" cy="19.7" r="5.8" fill="rgba(255,255,255,0.35)" stroke="rgba(120,120,120,0.4)" stroke-width="0.9"/><circle cx="17.8" cy="17.9" r="1.3" fill="rgba(110,110,110,0.4)"/><circle cx="21.4" cy="17.3" r="1.3" fill="rgba(110,110,110,0.4)"/><circle cx="23.3" cy="20.3" r="1.3" fill="rgba(110,110,110,0.4)"/><circle cx="21" cy="23.1" r="1.3" fill="rgba(110,110,110,0.4)"/><circle cx="17.5" cy="21.6" r="1.3" fill="rgba(110,110,110,0.4)"/><path d="M19.6 20 H20.8" stroke="rgba(110,110,110,0.4)" stroke-width="0.8"/></g></svg></div>
<div class="cell" style="left:692px;top:562px;width:93px;height:44px;background:#ffffff"><span class="t">13-12</span></div>
<div class="cell" style="left:787px;top:562px;width:128px;height:44px;background:#ffffff"><span class="t"><span class="c">百家乐</span></span></div>
<div class="cell" style="left:917px;top:562px;width:80px;height:44px;background:#ffffff"><span class="t">AS1</span></div>
<div class="cell" style="left:999px;top:562px;width:146px;height:44px;background:#ffffff"><span class="t"><span class="bl c">闲</span>(6)&nbsp;<span class="rd c">庄</span>(5)</span></div>
<div class="cell" style="left:1147px;top:562px;width:117px;height:44px;background:#ffffff"><span class="t"><span class="bl">50.00</span></span></div>
<div class="cell" style="left:1266px;top:562px;width:129px;height:44px;background:#ffffff"><span class="t">50.00</span></div>
<div class="cell" style="left:1397px;top:562px;width:113px;height:44px;background:#ffffff"><span class="t"><span class="rd">-50.00</span></span></div>
<div class="cell" style="left:1512px;top:562px;width:374px;height:44px;background:#ffffff"><span class="t">702.87/652.87</span></div>
<div class="cell" style="left:14px;top:608px;width:255px;height:43px;background:#ffffff"><span class="t">2025-11-22 06:35:55</span></div>
<div class="cell" style="left:271px;top:608px;width:194px;height:43px;background:#ffffff"><span class="t">522986247375</span></div>
<div class="cell" style="left:467px;top:608px;width:223px;height:43px;background:#ffffff"><span class="t">663838988</span><svg class="vid" width="30" height="30" viewBox="0 0 30 30"><rect x="0.5" y="0.5" width="29" height="29" rx="4" fill="rgba(246,246,246,0.55)" stroke="rgba(0,0,0,0.06)"/><g><path d="M5.8 5.6 H18.3 L24.3 10.3 V23.6 H5.8 Z" fill="none" stroke="rgba(120,120,120,0.38)" stroke-width="1"/><path d="M18.3 5.6 V10.3 H24.3" fill="none" stroke="rgba(120,120,120,0.38)"/><path d="M8.4 12.6 H10.2 V17.6 H8.4 Z M10.2 13.8 H11.6 V16.4 H10.2 Z M11.6 11.8 H19.5 V17.2 H11.6 Z" fill="rgba(110,110,110,0.42)"/><circle cx="20.2" cy="19.7" r="5.8" fill="rgba(255,255,255,0.35)" stroke="rgba(120,120,120,0.4)" stroke-width="0.9"/><circle cx="17.8" cy="17.9" r="1.3" fill="rgba(110,110,110,0.4)"/><circle cx="21.4" cy="17.3" r="1.3" fill="rgba(110,110,110,0.4)"/><circle cx="23.3" cy="20.3" r="1.3" fill="rgba(110,110,110,0.4)"/><circle cx="21" cy="23.1" r="1.3" fill="rgba(110,110,110,0.4)"/><circle cx="17.5" cy="21.6" r="1.3" fill="rgba(110,110,110,0.4)"/><path d="M19.6 20 H20.8" stroke="rgba(110,110,110,0.4)" stroke-width="0.8"/></g></svg></div>
<div class="cell" style="left:692px;top:608px;width:93px;height:43px;background:#ffffff"><span class="t">13-11</span></div>
<div class="cell" style="left:787px;top:608px;width:128px;height:43px;background:#ffffff"><span class="t"><span class="c">百家乐</span></span></div>
<div class="cell" style="left:917px;top:608px;width:80px;height:43px;background:#ffffff"><span class="t">AS1</span></div>
<div class="cell" style="left:999px;top:608px;width:146px;height:43px;background:#ffffff"><span class="t"><span class="bl c">闲</span>(7)&nbsp;<span class="rd c">庄</span>(7)</span></div>
<div class="cell" style="left:1147px;top:608px;width:117px;height:43px;background:#ffffff"><span class="t"><span class="bl">50.00</span></span></div>
<div class="cell" style="left:1266px;top:608px;width:129px;height:43px;background:#ffffff"><span class="t">0.00</span></div>
<div class="cell" style="left:1397px;top:608px;width:113px;height:43px;background:#ffffff"><span class="t">0.00</span></div>
<div class="cell" style="left:1512px;top:608px;width:374px;height:43px;background:#ffffff"><span class="t">702.87/702.87</span></div>
<div class="cell" style="left:14px;top:653px;width:255px;height:43px;background:#ffffff"><span class="t">2025-11-22 06:35:27</span></div>
<div class="cell" style="left:271px;top:653px;width:194px;height:43px;background:#ffffff"><span class="t">522986246567</span></div>
<div class="cell" style="left:467px;top:653px;width:223px;height:43px;background:#ffffff"><span class="t">663838908</span><svg class="vid" width="30" height="30" viewBox="0 0 30 30"><rect x="0.5" y="0.5" width="29" height="29" rx="4" fill="rgba(246,246,246,0.55)" stroke="rgba(0,0,0,0.06)"/><g><path d="M5.8 5.6 H18.3 L24.3 10.3 V23.6 H5.8 Z" fill="none" stroke="rgba(120,120,120,0.38)" stroke-width="1"/><path d="M18.3 5.6 V10.3 H24.3" fill="none" stroke="rgba(120,120,120,0.38)"/><path d="M8.4 12.6 H10.2 V17.6 H8.4 Z M10.2 13.8 H11.6 V16.4 H10.2 Z M11.6 11.8 H19.5 V17.2 H11.6 Z" fill="rgba(110,110,110,0.42)"/><circle cx="20.2" cy="19.7" r="5.8" fill="rgba(255,255,255,0.35)" stroke="rgba(120,120,120,0.4)" stroke-width="0.9"/><circle cx="17.8" cy="17.9" r="1.3" fill="rgba(110,110,110,0.4)"/><circle cx="21.4" cy="17.3" r="1.3" fill="rgba(110,110,110,0.4)"/><circle cx="23.3" cy="20.3" r="1.3" fill="rgba(110,110,110,0.4)"/><circle cx="21" cy="23.1" r="1.3" fill="rgba(110,110,110,0.4)"/><circle cx="17.5" cy="21.6" r="1.3" fill="rgba(110,110,110,0.4)"/><path d="M19.6 20 H20.8" stroke="rgba(110,110,110,0.4)" stroke-width="0.8"/></g></svg></div>
<div class="cell" style="left:692px;top:653px;width:93px;height:43px;background:#ffffff"><span class="t">13-10</span></div>
<div class="cell" style="left:787px;top:653px;width:128px;height:43px;background:#ffffff"><span class="t"><span class="c">百家乐</span></span></div>
<div class="cell" style="left:917px;top:653px;width:80px;height:43px;background:#ffffff"><span class="t">AS1</span></div>
<div class="cell" style="left:999px;top:653px;width:146px;height:43px;background:#ffffff"><span class="t"><span class="bl c">闲</span>(7)&nbsp;<span class="rd c">庄</span>(8)</span></div>
<div class="cell" style="left:1147px;top:653px;width:117px;height:43px;background:#ffffff"><span class="t"><span class="bl">50.00</span></span></div>
<div class="cell" style="left:1266px;top:653px;width:129px;height:43px;background:#ffffff"><span class="t">50.00</span></div>
<div class="cell" style="left:1397px;top:653px;width:113px;height:43px;background:#ffffff"><span class="t"><span class="rd">-50.00</span></span></div>
<div class="cell" style="left:1512px;top:653px;width:374px;height:43px;background:#ffffff"><span class="t">752.87/702.87</span></div>
<div class="cell" style="left:14px;top:698px;width:255px;height:44px;background:#ffffff"><span class="t">2025-11-22 06:35:01</span></div>
<div class="cell" style="left:271px;top:698px;width:194px;height:44px;background:#ffffff"><span class="t">522986245770</span></div>
<div class="cell" style="left:467px;top:698px;width:223px;height:44px;background:#ffffff"><span class="t">663838824</span><svg class="vid" width="30" height="30" viewBox="0 0 30 30"><rect x="0.5" y="0.5" width="29" height="29" rx="4" fill="rgba(246,246,246,0.55)" stroke="rgba(0,0,0,0.06)"/><g><path d="M5.8 5.6 H18.3 L24.3 10.3 V23.6 H5.8 Z" fill="none" stroke="rgba(120,120,120,0.38)" stroke-width="1"/><path d="M18.3 5.6 V10.3 H24.3" fill="none" stroke="rgba(120,120,120,0.38)"/><path d="M8.4 12.6 H10.2 V17.6 H8.4 Z M10.2 13.8 H11.6 V16.4 H10.2 Z M11.6 11.8 H19.5 V17.2 H11.6 Z" fill="rgba(110,110,110,0.42)"/><circle cx="20.2" cy="19.7" r="5.8" fill="rgba(255,255,255,0.35)" stroke="rgba(120,120,120,0.4)" stroke-width="0.9"/><circle cx="17.8" cy="17.9" r="1.3" fill="rgba(110,110,110,0.4)"/><circle cx="21.4" cy="17.3" r="1.3" fill="rgba(110,110,110,0.4)"/><circle cx="23.3" cy="20.3" r="1.3" fill="rgba(110,110,110,0.4)"/><circle cx="21" cy="23.1" r="1.3" fill="rgba(110,110,110,0.4)"/><circle cx="17.5" cy="21.6" r="1.3" fill="rgba(110,110,110,0.4)"/><path d="M19.6 20 H20.8" stroke="rgba(110,110,110,0.4)" stroke-width="0.8"/></g></svg></div>
<div class="cell" style="left:692px;top:698px;width:93px;height:44px;background:#ffffff"><span class="t">13-9</span></div>
<div class="cell" style="left:787px;top:698px;width:128px;height:44px;background:#ffffff"><span class="t"><span class="c">百家乐</span></span></div>
<div class="cell" style="left:917px;top:698px;width:80px;height:44px;background:#ffffff"><span class="t">AS1</span></div>
<div class="cell" style="left:999px;top:698px;width:146px;height:44px;background:#ffffff"><span class="t"><span class="bl c">闲</span>(8)&nbsp;<span class="rd c">庄</span>(0)</span></div>
<div class="cell" style="left:1147px;top:698px;width:117px;height:44px;background:#ffffff"><span class="t"><span class="bl">50.00</span></span></div>
<div class="cell" style="left:1266px;top:698px;width:129px;height:44px;background:#ffffff"><span class="t">50.00</span></div>
<div class="cell" style="left:1397px;top:698px;width:113px;height:44px;background:#ffffff"><span class="t"><span class="rd">-50.00</span></span></div>
<div class="cell" style="left:1512px;top:698px;width:374px;height:44px;background:#ffffff"><span class="t">802.87/752.87</span></div>
<div class="cell" style="left:14px;top:744px;width:255px;height:43px;background:#ffff99"><span class="t">2025-11-22 06:34:25</span></div>
<div class="cell" style="left:271px;top:744px;width:194px;height:43px;background:#ffff99"><span class="t">522986244648</span></div>
<div class="cell" style="left:467px;top:744px;width:223px;height:43px;background:#ffff99"><span class="t">663838727</span><svg class="vid" width="30" height="30" viewBox="0 0 30 30"><rect x="0.5" y="0.5" width="29" height="29" rx="4" fill="rgba(246,246,246,0.55)" stroke="rgba(0,0,0,0.06)"/><g><path d="M5.8 5.6 H18.3 L24.3 10.3 V23.6 H5.8 Z" fill="none" stroke="rgba(120,120,120,0.38)" stroke-width="1"/><path d="M18.3 5.6 V10.3 H24.3" fill="none" stroke="rgba(120,120,120,0.38)"/><path d="M8.4 12.6 H10.2 V17.6 H8.4 Z M10.2 13.8 H11.6 V16.4 H10.2 Z M11.6 11.8 H19.5 V17.2 H11.6 Z" fill="rgba(110,110,110,0.42)"/><circle cx="20.2" cy="19.7" r="5.8" fill="rgba(255,255,255,0.35)" stroke="rgba(120,120,120,0.4)" stroke-width="0.9"/><circle cx="17.8" cy="17.9" r="1.3" fill="rgba(110,110,110,0.4)"/><circle cx="21.4" cy="17.3" r="1.3" fill="rgba(110,110,110,0.4)"/><circle cx="23.3" cy="20.3" r="1.3" fill="rgba(110,110,110,0.4)"/><circle cx="21" cy="23.1" r="1.3" fill="rgba(110,110,110,0.4)"/><circle cx="17.5" cy="21.6" r="1.3" fill="rgba(110,110,110,0.4)"/><path d="M19.6 20 H20.8" stroke="rgba(110,110,110,0.4)" stroke-width="0.8"/></g></svg></div>
<div class="cell" style="left:692px;top:744px;width:93px;height:43px;background:#ffff99"><span class="t">13-8</span></div>
<div class="cell" style="left:787px;top:744px;width:128px;height:43px;background:#ffff99"><span class="t"><span class="c">百家乐</span></span></div>
<div class="cell" style="left:917px;top:744px;width:80px;height:43px;background:#ffff99"><span class="t">AS1</span></div>
<div class="cell" style="left:999px;top:744px;width:146px;height:43px;background:#ffff99"><span class="t"><span class="bl c">闲</span>(0)&nbsp;<span class="rd c">庄</span>(3)</span></div>
<div class="cell" style="left:1147px;top:744px;width:117px;height:43px;background:#ffff99"><span class="t"><span class="bl">50.00</span></span></div>
<div class="cell" style="left:1266px;top:744px;width:129px;height:43px;background:#ffff99"><span class="t">50.00</span></div>
<div class="cell" style="left:1397px;top:744px;width:113px;height:43px;background:#ffff99"><span class="t">47.50</span></div>
<div class="cell" style="left:1512px;top:744px;width:374px;height:43px;background:#ffff99"><span class="t">755.37/802.87</span></div>
<div class="cell" style="left:14px;top:789px;width:255px;height:43px;background:#ffffff"><span class="t">2025-11-22 06:33:57</span></div>
<div class="cell" style="left:271px;top:789px;width:194px;height:43px;background:#ffffff"><span class="t">522986243745</span></div>
<div class="cell" style="left:467px;top:789px;width:223px;height:43px;background:#ffffff"><span class="t">663838650</span><svg class="vid" width="30" height="30" viewBox="0 0 30 30"><rect x="0.5" y="0.5" width="29" height="29" rx="4" fill="rgba(246,246,246,0.55)" stroke="rgba(0,0,0,0.06)"/><g><path d="M5.8 5.6 H18.3 L24.3 10.3 V23.6 H5.8 Z" fill="none" stroke="rgba(120,120,120,0.38)" stroke-width="1"/><path d="M18.3 5.6 V10.3 H24.3" fill="none" stroke="rgba(120,120,120,0.38)"/><path d="M8.4 12.6 H10.2 V17.6 H8.4 Z M10.2 13.8 H11.6 V16.4 H10.2 Z M11.6 11.8 H19.5 V17.2 H11.6 Z" fill="rgba(110,110,110,0.42)"/><circle cx="20.2" cy="19.7" r="5.8" fill="rgba(255,255,255,0.35)" stroke="rgba(120,120,120,0.4)" stroke-width="0.9"/><circle cx="17.8" cy="17.9" r="1.3" fill="rgba(110,110,110,0.4)"/><circle cx="21.4" cy="17.3" r="1.3" fill="rgba(110,110,110,0.4)"/><circle cx="23.3" cy="20.3" r="1.3" fill="rgba(110,110,110,0.4)"/><circle cx="21" cy="23.1" r="1.3" fill="rgba(110,110,110,0.4)"/><circle cx="17.5" cy="21.6" r="1.3" fill="rgba(110,110,110,0.4)"/><path d="M19.6 20 H20.8" stroke="rgba(110,110,110,0.4)" stroke-width="0.8"/></g></svg></div>
<div class="cell" style="left:692px;top:789px;width:93px;height:43px;background:#ffffff"><span class="t">13-7</span></div>
<div class="cell" style="left:787px;top:789px;width:128px;height:43px;background:#ffffff"><span class="t"><span class="c">百家乐</span></span></div>
<div class="cell" style="left:917px;top:789px;width:80px;height:43px;background:#ffffff"><span class="t">AS1</span></div>
<div class="cell" style="left:999px;top:789px;width:146px;height:43px;background:#ffffff"><span class="t"><span class="bl c">闲</span>(0)&nbsp;<span class="rd c">庄</span>(9)</span></div>
<div class="cell" style="left:1147px;top:789px;width:117px;height:43px;background:#ffffff"><span class="t"><span class="bl">50.00</span></span></div>
<div class="cell" style="left:1266px;top:789px;width:129px;height:43px;background:#ffffff"><span class="t">50.00</span></div>
<div class="cell" style="left:1397px;top:789px;width:113px;height:43px;background:#ffffff"><span class="t">47.50</span></div>
<div class="cell" style="left:1512px;top:789px;width:374px;height:43px;background:#ffffff"><span class="t">707.87/755.37</span></div>
<div class="cell" style="left:14px;top:834px;width:255px;height:44px;background:#ffffff"><span class="t">2025-11-22 06:33:19</span></div>
<div class="cell" style="left:271px;top:834px;width:194px;height:44px;background:#ffffff"><span class="t">522986242585</span></div>
<div class="cell" style="left:467px;top:834px;width:223px;height:44px;background:#ffffff"><span class="t">663838547</span><svg class="vid" width="30" height="30" viewBox="0 0 30 30"><rect x="0.5" y="0.5" width="29" height="29" rx="4" fill="rgba(246,246,246,0.55)" stroke="rgba(0,0,0,0.06)"/><g><path d="M5.8 5.6 H18.3 L24.3 10.3 V23.6 H5.8 Z" fill="none" stroke="rgba(120,120,120,0.38)" stroke-width="1"/><path d="M18.3 5.6 V10.3 H24.3" fill="none" stroke="rgba(120,120,120,0.38)"/><path d="M8.4 12.6 H10.2 V17.6 H8.4 Z M10.2 13.8 H11.6 V16.4 H10.2 Z M11.6 11.8 H19.5 V17.2 H11.6 Z" fill="rgba(110,110,110,0.42)"/><circle cx="20.2" cy="19.7" r="5.8" fill="rgba(255,255,255,0.35)" stroke="rgba(120,120,120,0.4)" stroke-width="0.9"/><circle cx="17.8" cy="17.9" r="1.3" fill="rgba(110,110,110,0.4)"/><circle cx="21.4" cy="17.3" r="1.3" fill="rgba(110,110,110,0.4)"/><circle cx="23.3" cy="20.3" r="1.3" fill="rgba(110,110,110,0.4)"/><circle cx="21" cy="23.1" r="1.3" fill="rgba(110,110,110,0.4)"/><circle cx="17.5" cy="21.6" r="1.3" fill="rgba(110,110,110,0.4)"/><path d="M19.6 20 H20.8" stroke="rgba(110,110,110,0.4)" stroke-width="0.8"/></g></svg></div>
<div class="cell" style="left:692px;top:834px;width:93px;height:44px;background:#ffffff"><span class="t">13-6</span></div>
<div class="cell" style="left:787px;top:834px;width:128px;height:44px;background:#ffffff"><span class="t"><span class="c">百家乐</span></span></div>
<div class="cell" style="left:917px;top:834px;width:80px;height:44px;background:#ffffff"><span class="t">AS1</span></div>
<div class="cell" style="left:999px;top:834px;width:146px;height:44px;background:#ffffff"><span class="t"><span class="bl c">闲</span>(2)&nbsp;<span class="rd c">庄</span>(3)</span></div>
<div class="cell" style="left:1147px;top:834px;width:117px;height:44px;background:#ffffff"><span class="t"><span class="bl">50.00</span></span></div>
<div class="cell" style="left:1266px;top:834px;width:129px;height:44px;background:#ffffff"><span class="t">50.00</span></div>
<div class="cell" style="left:1397px;top:834px;width:113px;height:44px;background:#ffffff"><span class="t">47.50</span></div>
<div class="cell" style="left:1512px;top:834px;width:374px;height:44px;background:#ffffff"><span class="t">660.37/707.87</span></div>
<div class="cell" style="left:14px;top:880px;width:255px;height:43px;background:#ffffff"><span class="t">2025-11-22 06:32:48</span></div>
<div class="cell" style="left:271px;top:880px;width:194px;height:43px;background:#ffffff"><span class="t">522986241643</span></div>
<div class="cell" style="left:467px;top:880px;width:223px;height:43px;background:#ffffff"><span class="t">663838454</span><svg class="vid" width="30" height="30" viewBox="0 0 30 30"><rect x="0.5" y="0.5" width="29" height="29" rx="4" fill="rgba(246,246,246,0.55)" stroke="rgba(0,0,0,0.06)"/><g><path d="M5.8 5.6 H18.3 L24.3 10.3 V23.6 H5.8 Z" fill="none" stroke="rgba(120,120,120,0.38)" stroke-width="1"/><path d="M18.3 5.6 V10.3 H24.3" fill="none" stroke="rgba(120,120,120,0.38)"/><path d="M8.4 12.6 H10.2 V17.6 H8.4 Z M10.2 13.8 H11.6 V16.4 H10.2 Z M11.6 11.8 H19.5 V17.2 H11.6 Z" fill="rgba(110,110,110,0.42)"/><circle cx="20.2" cy="19.7" r="5.8" fill="rgba(255,255,255,0.35)" stroke="rgba(120,120,120,0.4)" stroke-width="0.9"/><circle cx="17.8" cy="17.9" r="1.3" fill="rgba(110,110,110,0.4)"/><circle cx="21.4" cy="17.3" r="1.3" fill="rgba(110,110,110,0.4)"/><circle cx="23.3" cy="20.3" r="1.3" fill="rgba(110,110,110,0.4)"/><circle cx="21" cy="23.1" r="1.3" fill="rgba(110,110,110,0.4)"/><circle cx="17.5" cy="21.6" r="1.3" fill="rgba(110,110,110,0.4)"/><path d="M19.6 20 H20.8" stroke="rgba(110,110,110,0.4)" stroke-width="0.8"/></g></svg></div>
<div class="cell" style="left:692px;top:880px;width:93px;height:43px;background:#ffffff"><span class="t">13-5</span></div>
<div class="cell" style="left:787px;top:880px;width:128px;height:43px;background:#ffffff"><span class="t"><span class="c">百家乐</span></span></div>
<div class="cell" style="left:917px;top:880px;width:80px;height:43px;background:#ffffff"><span class="t">AS1</span></div>
<div class="cell" style="left:999px;top:880px;width:146px;height:43px;background:#ffffff"><span class="t"><span class="bl c">闲</span>(0)&nbsp;<span class="rd c">庄</span>(4)</span></div>
<div class="cell" style="left:1147px;top:880px;width:117px;height:43px;background:#ffffff"><span class="t"><span class="bl">50.00</span></span></div>
<div class="cell" style="left:1266px;top:880px;width:129px;height:43px;background:#ffffff"><span class="t">50.00</span></div>
<div class="cell" style="left:1397px;top:880px;width:113px;height:43px;background:#ffffff"><span class="t">47.50</span></div>
<div class="cell" style="left:1512px;top:880px;width:374px;height:43px;background:#ffffff"><span class="t">612.87/660.37</span></div>
<div class="cell ft" style="left:14px;top:923px;width:255px;height:30px;"><span class="t"><span class="c">小计</span></span></div>
<div class="cell ft" style="left:271px;top:923px;width:194px;height:30px;"><span class="t">15</span></div>
<div class="cell ft" style="left:467px;top:923px;width:223px;height:30px;"></div>
<div class="cell ft" style="left:692px;top:923px;width:93px;height:30px;"></div>
<div class="cell ft" style="left:787px;top:923px;width:128px;height:30px;"></div>
<div class="cell ft" style="left:917px;top:923px;width:80px;height:30px;"></div>
<div class="cell ft" style="left:999px;top:923px;width:146px;height:30px;"></div>
<div class="cell ft" style="left:1147px;top:923px;width:117px;height:30px;"><span class="t">1100.00</span></div>
<div class="cell ft" style="left:1266px;top:923px;width:129px;height:30px;"><span class="t">1050.00</span></div>
<div class="cell ft" style="left:1397px;top:923px;width:113px;height:30px;"><span class="t"><span class="rd" style="font-weight:normal">-270.00</span></span></div>
<div class="cell ft" style="left:1512px;top:923px;width:374px;height:30px;"></div>
<div class="cell ft" style="left:14px;top:955px;width:255px;height:29px;border-bottom-left-radius:4px;"><span class="t"><span class="c">总计</span></span></div>
<div class="cell ft" style="left:271px;top:955px;width:194px;height:29px;"><span class="t">15</span></div>
<div class="cell ft" style="left:467px;top:955px;width:223px;height:29px;"></div>
<div class="cell ft" style="left:692px;top:955px;width:93px;height:29px;"></div>
<div class="cell ft" style="left:787px;top:955px;width:128px;height:29px;"></div>
<div class="cell ft" style="left:917px;top:955px;width:80px;height:29px;"></div>
<div class="cell ft" style="left:999px;top:955px;width:146px;height:29px;"></div>
<div class="cell ft" style="left:1147px;top:955px;width:117px;height:29px;"><span class="t">1100.00</span></div>
<div class="cell ft" style="left:1266px;top:955px;width:129px;height:29px;"><span class="t">1050.00</span></div>
<div class="cell ft" style="left:1397px;top:955px;width:113px;height:29px;"><span class="t"><span class="rd" style="font-weight:normal">-270.00</span></span></div>
<div class="cell ft" style="left:1512px;top:955px;width:374px;height:29px;border-bottom-right-radius:4px;"></div>
</body></html>
